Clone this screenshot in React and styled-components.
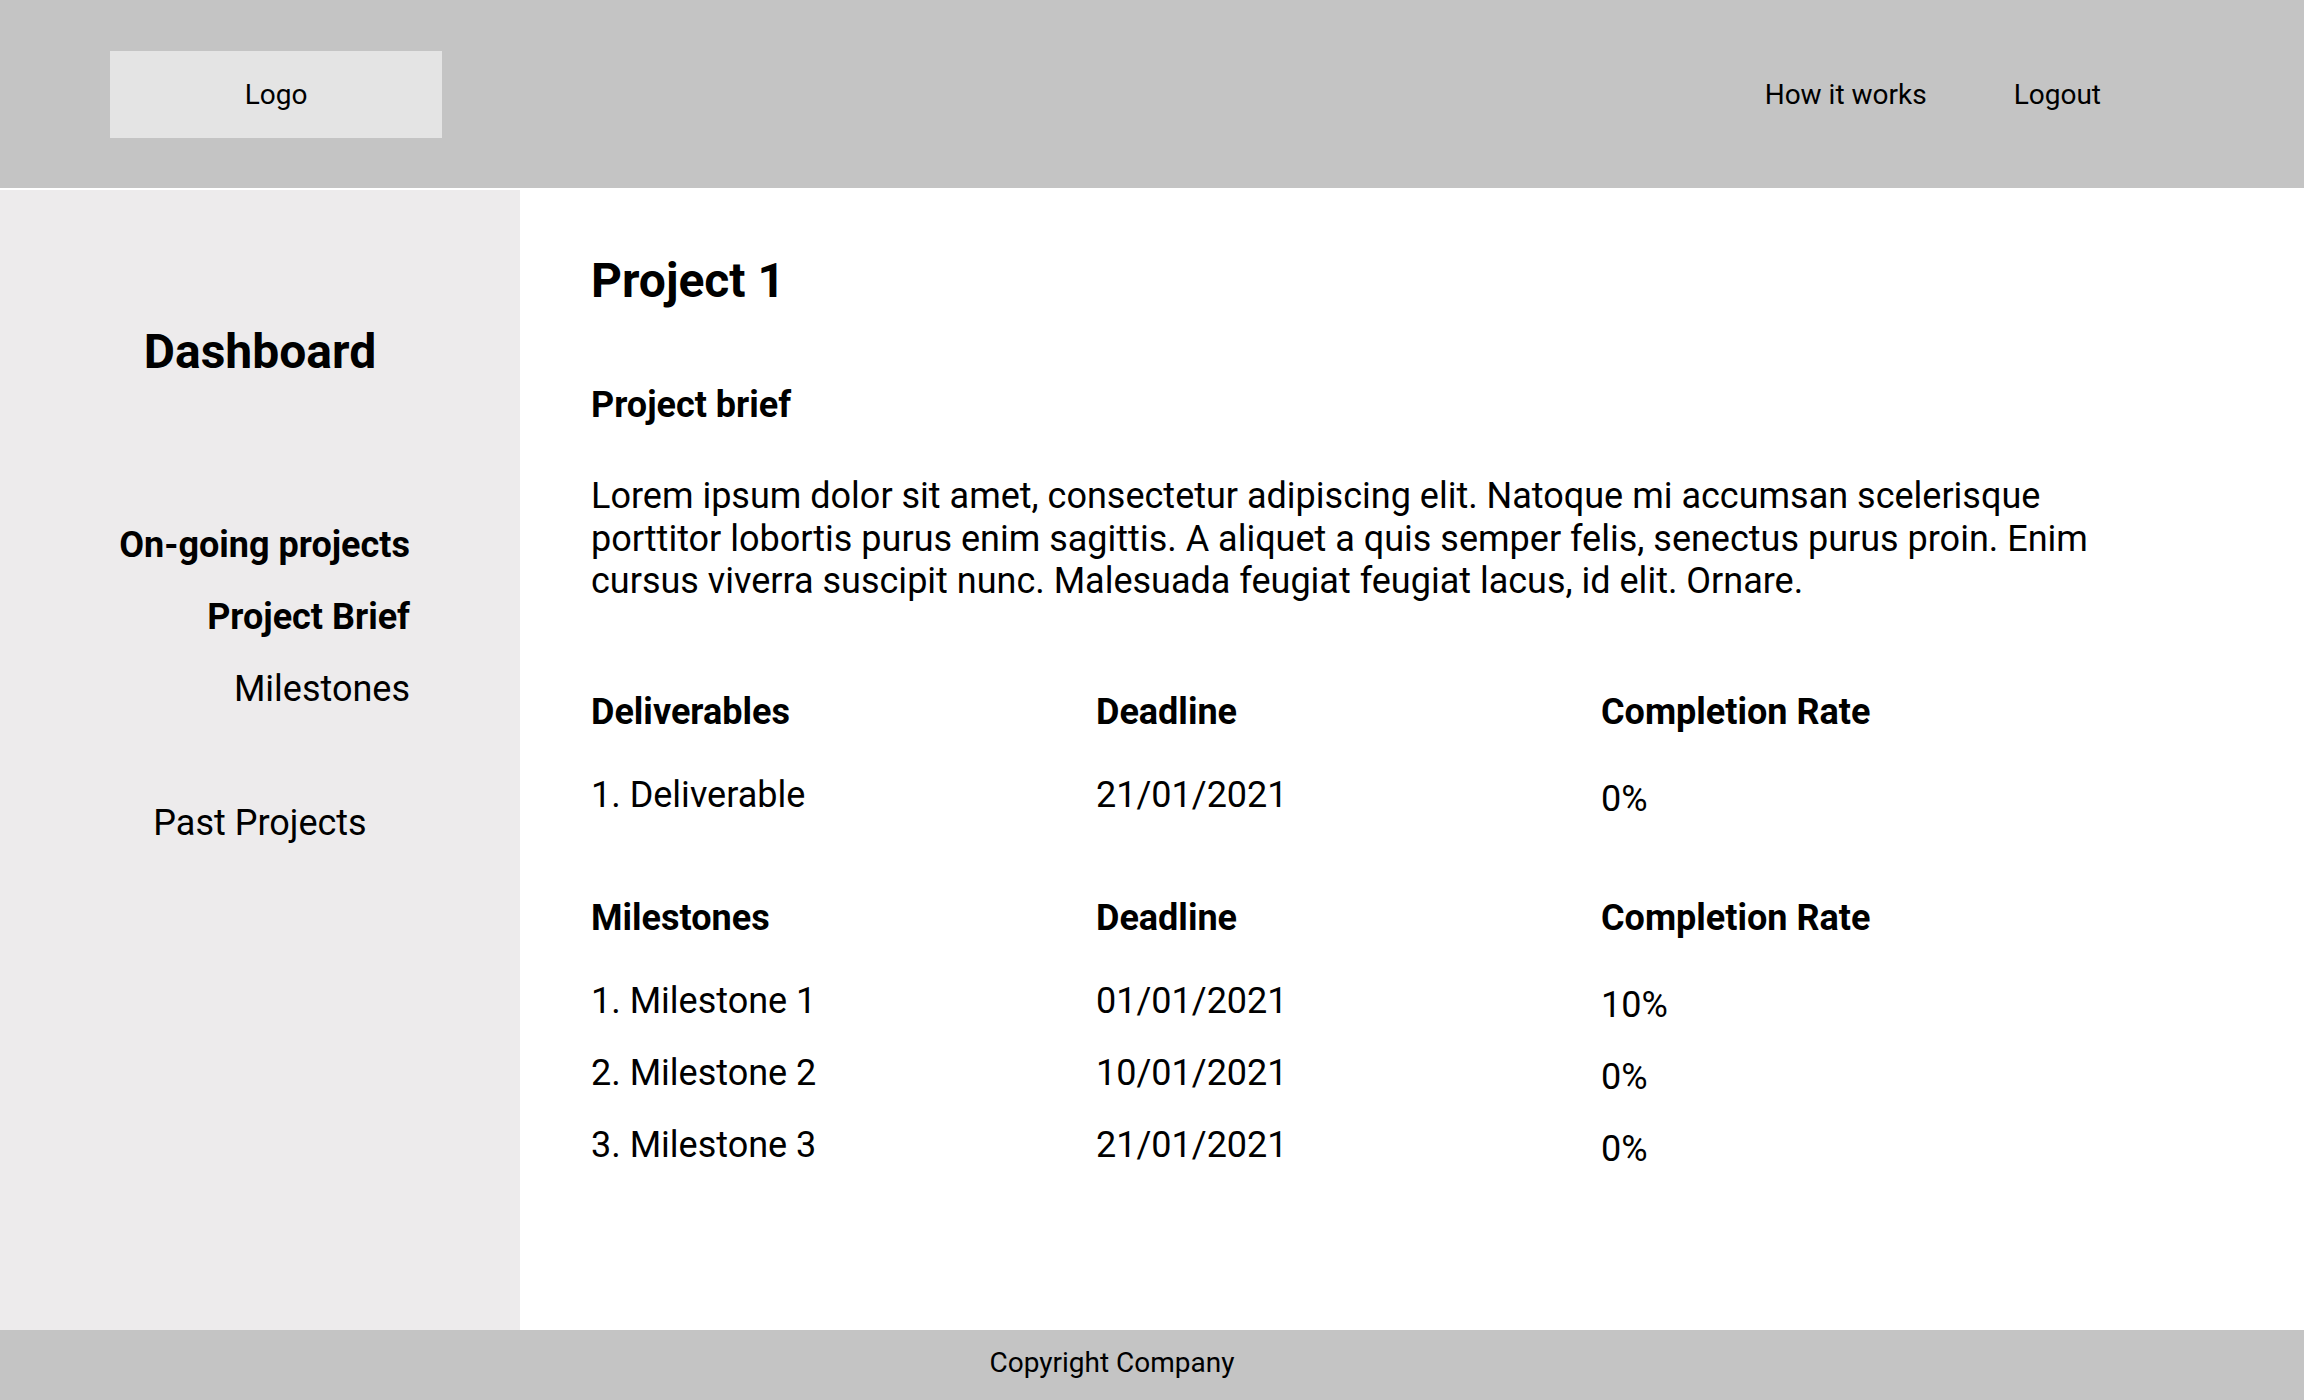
import React from 'react';
import styled, { createGlobalStyle } from 'styled-components';

const GlobalStyle = createGlobalStyle`
  * { box-sizing: border-box; }
  body {
    margin: 0;
    background: #ffffff;
    font-family: Roboto, "Liberation Sans", Arial, sans-serif;
    color: #000000;
  }
`;

const Page = styled.div`
  min-height: 1400px;
  display: flex;
  flex-direction: column;
`;

const Header = styled.header`
  height: 188px;
  margin-bottom: 2px;
  background: #c4c4c4;
  display: flex;
  align-items: center;
  justify-content: space-between;
  padding: 1px 203px 0 110px;
`;

const LogoBox = styled.div`
  width: 332px;
  height: 87px;
  background: #e4e4e4;
  display: flex;
  align-items: center;
  justify-content: center;
  font-size: 28px;
`;

const Nav = styled.nav`
  display: flex;
  gap: 87px;
`;

const NavLink = styled.a`
  font-size: 28px;
  color: #000;
  text-decoration: none;
  cursor: pointer;
`;

const Body = styled.div`
  flex: 1;
  display: flex;
`;

const Sidebar = styled.aside`
  width: 520px;
  flex-shrink: 0;
  background: #edebec;
  padding-top: 134px;
  display: flex;
  flex-direction: column;
`;

const SideTitle = styled.h2`
  margin: 0;
  font-size: 48px;
  line-height: 56px;
  font-weight: 700;
  text-align: center;
`;

const SideNav = styled.div`
  margin-top: 144px;
  padding-right: 110px;
  display: flex;
  flex-direction: column;
  align-items: flex-end;
  gap: 29px;
`;

const SideItem = styled.div`
  font-size: 36px;
  line-height: 43px;
  font-weight: ${p => (p.$bold ? 700 : 400)};
`;

const PastLink = styled(SideItem)`
  margin-top: 91px;
  text-align: center;
`;

const Main = styled.main`
  flex: 1;
  padding: 63px 0 60px 71px;
`;

const Title = styled.h1`
  margin: 0;
  font-size: 48px;
  line-height: 56px;
  font-weight: 700;
`;

const SubTitle = styled.h3`
  margin: 75px 0 0;
  font-size: 36px;
  line-height: 43px;
  font-weight: 700;
`;

const Brief = styled.p`
  margin: 48px 0 0;
  max-width: 1540px;
  font-size: 36px;
  line-height: 42.5px;
`;

const Table = styled.section`
  margin-top: ${p => p.$gap}px;
`;

const Row = styled.div`
  display: grid;
  grid-template-columns: 505px 505px 505px;
  margin-bottom: ${p => (p.$head ? 40 : 29)}px;
  &:last-child { margin-bottom: 0; }
`;

const Cell = styled.div`
  font-size: 36px;
  line-height: 43px;
  font-weight: ${p => (p.$head ? 700 : 400)};
  transform: translateY(${p => (p.$rate ? 4 : 0)}px);
`;

const Footer = styled.footer`
  height: 70px;
  background: #c4c4c4;
  display: flex;
  align-items: center;
  justify-content: center;
  padding: 0 80px 6px 0;
  font-size: 28px;
`;

const deliverables = [
  { name: '1. Deliverable', date: '21/01/2021', rate: '0%' },
];

const milestones = [
  { name: '1. Milestone 1', date: '01/01/2021', rate: '10%' },
  { name: '2. Milestone 2', date: '10/01/2021', rate: '0%' },
  { name: '3. Milestone 3', date: '21/01/2021', rate: '0%' },
];

const DataTable = ({ title, rows, gap }) => (
  <Table $gap={gap}>
    <Row $head>
      <Cell $head>{title}</Cell>
      <Cell $head>Deadline</Cell>
      <Cell $head>Completion Rate</Cell>
    </Row>
    {rows.map(r => (
      <Row key={r.name}>
        <Cell>{r.name}</Cell>
        <Cell>{r.date}</Cell>
        <Cell $rate>{r.rate}</Cell>
      </Row>
    ))}
  </Table>
);

const App = () => {
  return (
    <Page>
      <GlobalStyle />
      <Header>
        <LogoBox>Logo</LogoBox>
        <Nav>
          <NavLink>How it works</NavLink>
          <NavLink>Logout</NavLink>
        </Nav>
      </Header>
      <Body>
        <Sidebar>
          <SideTitle>Dashboard</SideTitle>
          <SideNav>
            <SideItem $bold>On-going projects</SideItem>
            <SideItem $bold>Project Brief</SideItem>
            <SideItem>Milestones</SideItem>
          </SideNav>
          <PastLink>Past Projects</PastLink>
        </Sidebar>
        <Main>
          <Title>Project 1</Title>
          <SubTitle>Project brief</SubTitle>
          <Brief>
            Lorem ipsum dolor sit amet, consectetur adipiscing elit. Natoque mi accumsan scelerisque
            porttitor lobortis purus enim sagittis. A aliquet a quis semper felis, senectus purus proin.
            Enim cursus viverra suscipit nunc. Malesuada feugiat feugiat lacus, id elit. Ornare.
          </Brief>
          <DataTable title="Deliverables" rows={deliverables} gap={88} />
          <DataTable title="Milestones" rows={milestones} gap={80} />
        </Main>
      </Body>
      <Footer>Copyright Company</Footer>
    </Page>
  );
};

export default App;
